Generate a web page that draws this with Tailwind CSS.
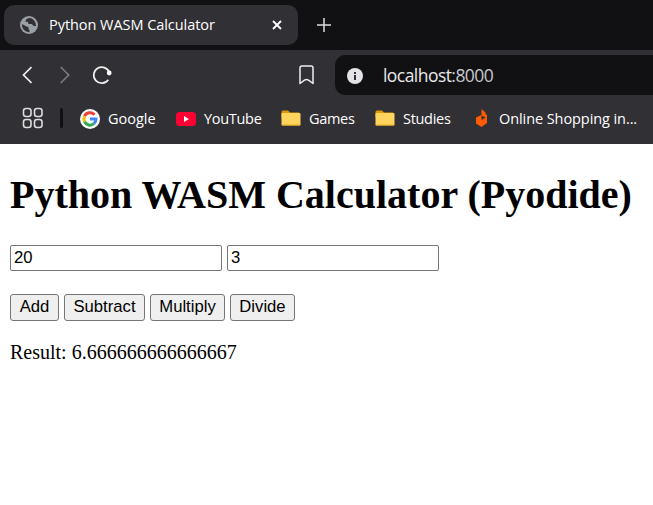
<!DOCTYPE html>
<html lang="en">
<head>
<meta charset="utf-8">
<title>Python WASM Calculator</title>
<script src="https://cdn.jsdelivr.net/npm/@tailwindcss/browser@4"></script>
</head>
<body class="h-[505px] w-[653px] overflow-hidden bg-white font-['Open_Sans',sans-serif] text-[15px] text-white">
<div class="flex h-[50px] items-center bg-[#111113] pl-1">
  <div class="flex h-10 w-[294px] items-center rounded-[10px] bg-[#313035] pl-4">
    <svg class="size-[18px] shrink-0" viewBox="0 0 18 18"><circle cx="9" cy="9" r="9" fill="#9aa0a6"/><path d="M2 8 6.500 10.500 8.500 11v2l1 1.200v2A7.200 7.200 0 0 1 2 8ZM11 2.200C8.500 1.700 6 3 5.500 5c0 1.300 1.200.8 2 .8 1 0 0 2 1.500 2.200h2.500c1.500.3 1 2 2.500 2h2C16 6.500 14 3.300 11 2.200Z" fill="#313035"/></svg>
    <span class="ml-[11px] w-[223px] whitespace-nowrap text-[14.500px] tracking-[-0.050px]">Python WASM Calculator</span>
    <svg class="size-[10px] shrink-0" viewBox="0 0 10 10" fill="none" stroke="#fff" stroke-width="1.900"><path d="m1 1 8 8M9 1 1 9"/></svg>
  </div>
  <svg class="ml-[19px] size-[14px]" viewBox="0 0 14 14" fill="none" stroke="#ddd" stroke-width="1.500"><path d="M7 0v14M0 7h14"/></svg>
</div>
<div class="h-[94px] bg-[#313035] pt-[5px]">
  <div class="flex h-10 items-center pl-[22px]">
    <svg class="h-[18px] w-[10px]" viewBox="0 0 10 18" fill="none" stroke="#eee" stroke-width="1.700"><path d="M9.500 1 1.500 9l8 8"/></svg>
    <svg class="ml-[28px] h-[18px] w-[10px]" viewBox="0 0 10 18" fill="none" stroke="#7c7b80" stroke-width="1.700"><path d="m.7 1 8 8-8 8"/></svg>
    <svg class="ml-[22px] h-5 w-5" viewBox="0 0 20 20" fill="none" stroke="#eee" stroke-width="1.700"><path d="M17.300 7.500A8 8 0 1 0 16.300 14.700"/><circle cx="17.200" cy="8" r="2.400" fill="#fff" stroke="none"/></svg>
    <svg class="ml-[187px] h-5 w-[15px]" viewBox="0 0 15 20" fill="none" stroke="#eee" stroke-width="1.500" stroke-linejoin="round"><path d="M1 18.500V3Q1 1 3 1h9q2 0 2 2v15.500l-4.500-3.300q-2-1.200-4 0Z"/></svg>
    <div class="ml-[21px] flex h-10 flex-1 items-center rounded-l-[10px] bg-[#111113] pl-[12px]">
      <svg class="mt-px size-4" viewBox="0 0 16 16"><circle cx="8" cy="8" r="8" fill="#e4e3e8"/><path d="M7 4h2v2H7zM7 7h2v5H7z" fill="#313035"/></svg>
      <span class="ml-[20px] whitespace-nowrap text-[17.500px] tracking-[-0.550px] text-[#e8e8e8]">localhost<span class="text-[#c8c8cc]">:8000</span></span>
    </div>
  </div>
  <div class="mt-[3px] flex h-10 items-center pl-[22px] text-[14.500px]">
    <svg class="size-[22px] shrink-0" viewBox="0 0 22 22" fill="none" stroke="#ddd" stroke-width="1.600"><rect x="1.500" y="1.500" width="7.500" height="8" rx="2.500"/><rect x="12.500" y="1.500" width="7.500" height="8" rx="2.500"/><rect x="1.500" y="12.500" width="7.500" height="8" rx="2.500"/><rect x="12.500" y="12.500" width="7.500" height="8" rx="2.500"/></svg>
    <div class="ml-4 h-5 w-[3px] rounded-full bg-[#111113]"></div>
    <svg class="mt-px ml-[17px] size-5 shrink-0" viewBox="0 0 20 20"><circle cx="10" cy="10" r="10" fill="#fff"/><g fill="none" stroke-width="3"><path d="M14.500 5.700A6.100 6.100 0 0 0 4.500 7.200" stroke="#ea4335"/><path d="M4.500 7.200a6.100 6.100 0 0 0 0 5.600" stroke="#fbbc05"/><path d="M4.500 12.800A6.100 6.100 0 0 0 13.900 14.700" stroke="#34a853"/><path d="M13.900 14.700A6.100 6.100 0 0 0 16 10h-6" stroke="#4285f4"/></g></svg>
    <span class="mt-[2px] ml-2 w-[68px] whitespace-nowrap">Google</span>
    <svg class="mt-px h-[14px] w-5 shrink-0" viewBox="0 0 20 14"><rect width="20" height="14" rx="3.500" fill="#ff0033"/><path d="m8 4 5 3-5 3Z" fill="#fff"/></svg>
    <span class="mt-[2px] ml-2 w-[77px] whitespace-nowrap tracking-[-0.300px]">YouTube</span>
    <svg class="h-4 w-5 shrink-0" viewBox="0 0 20 16"><path d="M.5 2Q.5.500 2 .5h5l2 2h9v5H.5Z" fill="#e09a08"/><rect x=".5" y="3" width="19" height="12.500" rx="1.200" fill="#ffd45c"/><path d="M.5 14.500h19q0 1-1 1h-17q-1 0-1-1" fill="#e7a91f"/></svg>
    <span class="mt-[2px] ml-2 w-[66px] whitespace-nowrap tracking-[-0.300px]">Games</span>
    <svg class="h-4 w-5 shrink-0" viewBox="0 0 20 16"><path d="M.5 2Q.5.500 2 .5h5l2 2h9v5H.5Z" fill="#e09a08"/><rect x=".5" y="3" width="19" height="12.500" rx="1.200" fill="#ffd45c"/><path d="M.5 14.500h19q0 1-1 1h-17q-1 0-1-1" fill="#e7a91f"/></svg>
    <span class="mt-[2px] ml-2 w-[73px] whitespace-nowrap tracking-[-0.300px]">Studies</span>
    <svg class="h-[18px] w-[11px] shrink-0" viewBox="0 0 11 18"><path d="M5.500 0 9.500 3.500V5L11 6v8l-5.500 4L0 14.500V8.500L5.500 6Z" fill="#ff5b05"/><path d="m5.500 6.500 4 2-4 2.500Z" fill="#313035"/></svg>
    <span class="mt-[2px] ml-3 whitespace-nowrap tracking-[-0.080px]">Online Shopping in...</span>
  </div>
</div>
<main class="pl-[10px] font-['Liberation_Serif',serif] text-[20px] text-black">
  <h1 class="pt-[28px] text-[40px] leading-[46px] font-bold whitespace-nowrap">Python WASM Calculator (Pyodide)</h1>
  <div class="mt-[27px] flex gap-[5px] font-['Liberation_Sans',sans-serif] text-[16.667px]">
    <input class="h-[26px] w-[212px] rounded-[2px] border border-[#767676] bg-white px-[3px] leading-5" value="20">
    <input class="h-[26px] w-[212px] rounded-[2px] border border-[#767676] bg-white px-[3px] leading-5" value="3">
  </div>
  <div class="mt-[23px] flex gap-[5px] font-['Liberation_Sans',sans-serif] text-[16.667px]">
    <button class="h-[27px] w-[49px] rounded-[3px] border border-[#767676] bg-[#efefef] leading-none">Add</button>
    <button class="h-[27px] w-[81px] rounded-[3px] border border-[#767676] bg-[#efefef] leading-none">Subtract</button>
    <button class="h-[27px] w-[75px] rounded-[3px] border border-[#767676] bg-[#efefef] leading-none">Multiply</button>
    <button class="h-[27px] w-[65px] rounded-[3px] border border-[#767676] bg-[#efefef] leading-none">Divide</button>
  </div>
  <p class="mt-[20px] leading-[23px]">Result: 6.666666666666667</p>
</main>
</body>
</html>
